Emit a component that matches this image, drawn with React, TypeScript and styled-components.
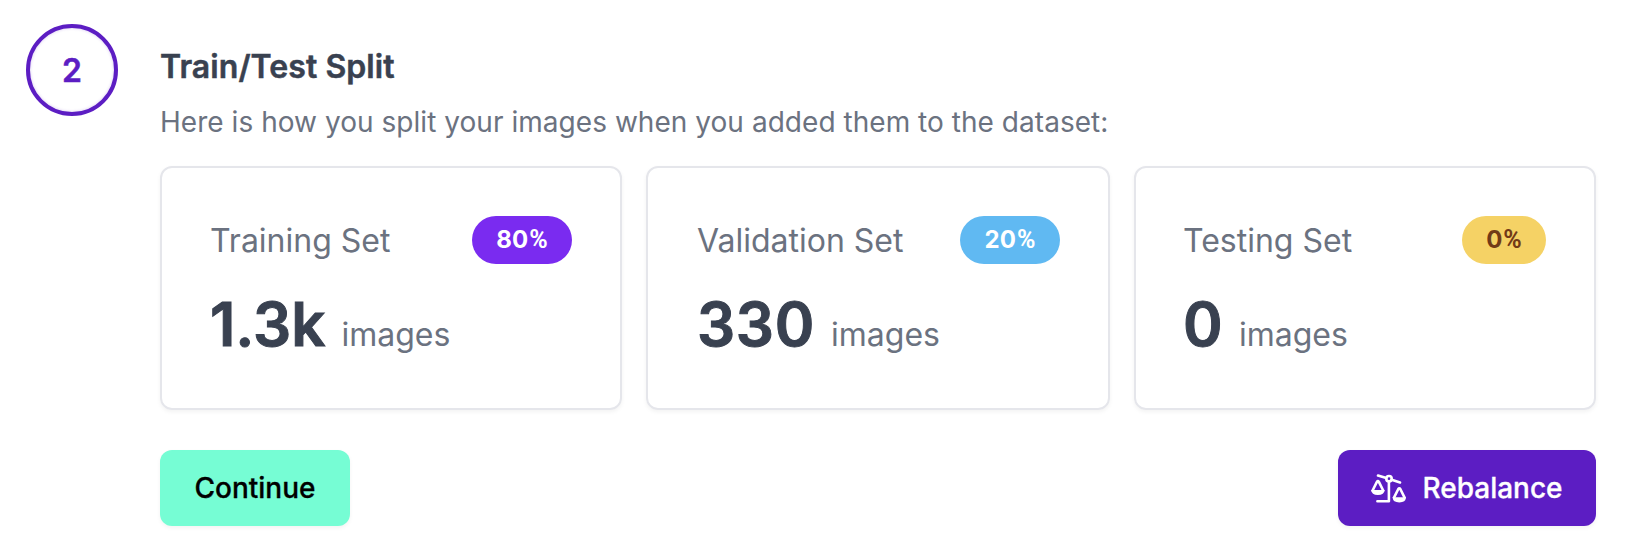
import React from "react";
import styled, { createGlobalStyle } from "styled-components";

const GlobalStyle = createGlobalStyle`
  *, *::before, *::after { box-sizing: border-box; }
  body { margin: 0; background: #fff; font-family: Inter, "Liberation Sans", sans-serif; color: #394150; }
  p, h2, h3 { margin: 0; }
`;

const Step = styled.section`
  display: flex;
  gap: 42px;
  width: 1638px;
  height: 550px;
  padding: 24px 42px 0 26px;
`;

const StepNumber = styled.div`
  display: flex;
  flex: none;
  align-items: center;
  justify-content: center;
  width: 92px;
  height: 92px;
  border: 4px solid #5c1dc3;
  border-radius: 50%;
  box-shadow: inset 0 0 3px rgba(91, 29, 196, 0.25);
  color: #5c1dc3;
  font-size: 32px;
  font-weight: 600;
  -webkit-text-stroke: 0.5px currentColor;
`;

const Content = styled.div`
  flex: 1;
  min-width: 0;
`;

const Title = styled.h2`
  padding-top: 23px;
  font-size: 32px;
  line-height: 40px;
  font-weight: 600;
  letter-spacing: 0.07px;
  color: #394150;
  white-space: nowrap;
  -webkit-text-stroke: 0.5px currentColor;
`;

const Description = styled.p`
  margin-top: 15px;
  font-size: 28px;
  line-height: 40px;
  letter-spacing: 0.04px;
  color: #6b7280;
  white-space: nowrap;
`;

const Cards = styled.div`
  display: grid;
  grid-template-columns: 462px 464px 462px;
  gap: 24px;
  margin-top: 24px;
`;

const Card = styled.article<{ $inset: number }>`
  height: 244px;
  padding: 48px 48px 48px ${(p) => p.$inset}px;
  border: 2px solid #e5e6eb;
  border-radius: 12px;
  box-shadow: 0 2px 4px rgba(0, 0, 0, 0.05);
`;

const CardHeader = styled.div`
  display: flex;
  align-items: center;
  justify-content: space-between;
  height: 48px;
`;

const CardTitle = styled.h3`
  font-size: 32px;
  font-weight: 400;
  color: #6b7280;
  white-space: nowrap;
`;

const Badge = styled.span<{ $background: string; $color: string; $width: number }>`
  display: flex;
  justify-content: center;
  width: ${(p) => p.$width}px;
  border-radius: 24px;
  background: ${(p) => p.$background};
  color: ${(p) => p.$color};
  font-size: 24px;
  line-height: 48px;
  font-weight: 700;
`;

const Percent = styled.span`
  margin-left: 1px;
  font-family: Roboto, Inter, sans-serif;
  font-size: 25px;
`;

const Amount = styled.p`
  display: flex;
  align-items: baseline;
  gap: 16px;
  margin-top: 20px;
  line-height: 80px;
`;

const Count = styled.span<{ $spacing: number }>`
  font-size: 60px;
  font-weight: 600;
  letter-spacing: ${(p) => p.$spacing}px;
  color: #394150;
  -webkit-text-stroke: 1px currentColor;
`;

const Unit = styled.span`
  font-size: 32px;
  color: #6b7280;
`;

const Actions = styled.div`
  display: flex;
  justify-content: space-between;
  margin-top: 40px;
`;

const Button = styled.button<{ $background: string; $color: string; $width: number }>`
  display: flex;
  align-items: center;
  justify-content: center;
  gap: 16px;
  width: ${(p) => p.$width}px;
  height: 76px;
  padding: 0;
  border: 0;
  border-radius: 12px;
  background: ${(p) => p.$background};
  color: ${(p) => p.$color};
  font: 500 28px Inter, "Liberation Sans", sans-serif;
  -webkit-text-stroke: 0.3px currentColor;
  box-shadow: 0 2px 4px rgba(0, 0, 0, 0.05);
`;

const ScaleIcon = () => (
  <svg width="35" height="29" viewBox="0 0 35 29" fill="none" stroke="currentColor" strokeWidth="2.6" strokeLinecap="round" strokeLinejoin="round" aria-hidden="true">
    <circle cx="18" cy="4.7" r="2.7" />
    <path d="M7 1.5 15.3 4M20.7 5.7 29 8.5M17.9 7.5V27.2H6.4" />
    <path d="M1.6 16.5 5.9 7.9Q6.9 6.3 7.900 7.900L12.200 16.500" />
    <path d="M.2 16H13.600Q13.300 21 6.900 21T.2 16Z" fill="currentColor" stroke="none" />
    <path d="M23 23.600 27.300 15Q28.300 13.400 29.300 15L33.600 23.600" />
    <path d="M21.600 23.200H35Q34.700 28.400 28.300 28.400T21.600 23.200Z" fill="currentColor" stroke="none" />
  </svg>
);

const sets = [
  { name: "Training Set", percent: "80", count: "1.3k", background: "#7a2bf0", color: "#fff", width: 100, inset: 48, spacing: 0 },
  { name: "Validation Set", percent: "20", count: "330", background: "#60b9f2", color: "#fff", width: 100, inset: 49, spacing: 0.7 },
  { name: "Testing Set", percent: "0", count: "0", background: "#f5d265", color: "#713a17", width: 84, inset: 47, spacing: 0.3 },
];

export default function App() {
  return (
    <>
      <GlobalStyle />
      <Step>
        <StepNumber>2</StepNumber>
        <Content>
          <Title>Train/Test Split</Title>
          <Description>Here is how you split your images when you added them to the dataset:</Description>
          <Cards>
            {sets.map((s) => (
              <Card key={s.name} $inset={s.inset}>
                <CardHeader>
                  <CardTitle>{s.name}</CardTitle>
                  <Badge $background={s.background} $color={s.color} $width={s.width}>
                    {s.percent}<Percent>%</Percent>
                  </Badge>
                </CardHeader>
                <Amount><Count $spacing={s.spacing}>{s.count}</Count><Unit>images</Unit></Amount>
              </Card>
            ))}
          </Cards>
          <Actions>
            <Button $background="#76fdd4" $color="#000" $width={190}>Continue</Button>
            <Button $background="#5c1dc3" $color="#fff" $width={258}><ScaleIcon />Rebalance</Button>
          </Actions>
        </Content>
      </Step>
    </>
  );
}
